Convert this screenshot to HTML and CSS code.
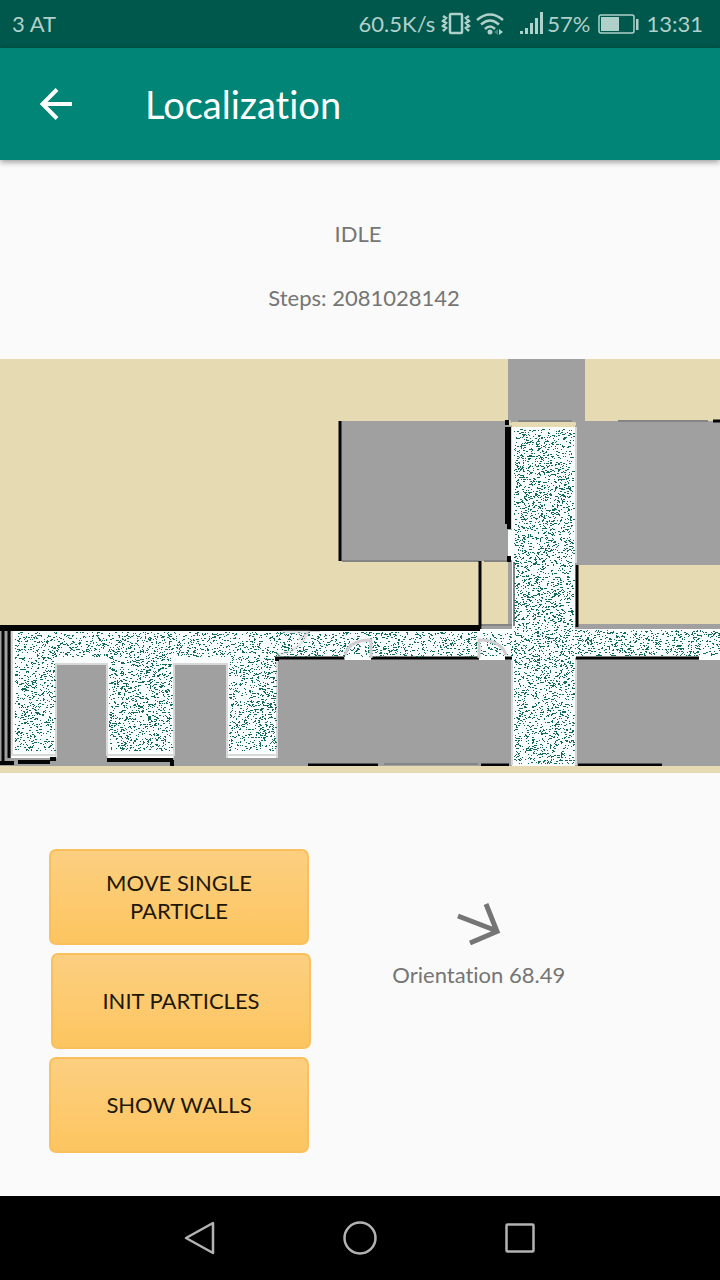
FILE: index.html
```html
<!DOCTYPE html>
<html lang="en">
<head>
<meta charset="utf-8">
<meta name="viewport" content="width=device-width, initial-scale=1">
<title>Localization</title>
<link rel="stylesheet" href="styles.css">
</head>
<body>
<div class="screen">
  <div class="status-bar">
    <span class="carrier">3 AT</span>
    <span class="speed">60.5K/s</span>
    <svg class="icon-vibrate" width="30" height="26" viewBox="0 0 30 26" aria-hidden="true">
      <rect x="9" y="3" width="12" height="19" rx="1" fill="none" stroke="currentColor" stroke-width="2.500"/>
      <path d="M2 5l3 2-3 3 3 2-3 3 3 2-3 3M28 5l-3 2 3 3-3 2 3 3-3 2 3 3" fill="none" stroke="currentColor" stroke-width="2.500"/>
    </svg>
    <svg class="icon-wifi" width="28" height="26" viewBox="0 0 28 26" aria-hidden="true">
      <path d="M1 9Q14-2 27 9M5 13.500Q14 5.500 23 13.500M9 18Q14 13 19 18" fill="none" stroke="currentColor" stroke-width="2.500"/>
      <circle cx="14" cy="21" r="2.500" fill="currentColor"/>
      <path d="M22 18v6l-4-3z" fill="currentColor" opacity=".4"/>
      <path d="M23 18v6l4-3z" fill="currentColor"/>
    </svg>
    <svg class="icon-signal" width="24" height="26" viewBox="0 0 24 26" aria-hidden="true">
      <path d="M0 20h3v3H0zM5 17h3v6H5zM10 12h3v11h-3zM15 7h3v16h-3zM20 1h3v22h-3z" fill="currentColor"/>
    </svg>
    <span class="percent">57%</span>
    <svg class="icon-battery" width="42" height="20" viewBox="0 0 42 20" aria-hidden="true">
      <rect x="1" y="1" width="35" height="18" rx="2" fill="none" stroke="currentColor" stroke-width="1.500"/>
      <path d="M3 3h18v14H3zM38 5h2.500v11H38z" fill="currentColor"/>
    </svg>
    <span class="clock">13:31</span>
  </div>

  <header class="app-bar">
    <button class="back" type="button" aria-label="Navigate up">
      <svg width="32" height="32" viewBox="0 0 32 32" aria-hidden="true">
        <path d="M32 16H3M17 1.500L2.500 16 17 30.500" fill="none" stroke="currentColor" stroke-width="4"/>
      </svg>
    </button>
    <h1 class="title">Localization</h1>
  </header>

  <main class="content">
    <div class="readout">
      <p class="state">IDLE</p>
      <p class="steps">Steps: 2081028142</p>
    </div>

    <svg class="map" viewBox="0 359 720 414" role="img" aria-label="Floor plan with particles">
      <rect class="ground" x="0" y="359" width="720" height="414"/>
      <g class="room">
        <path d="M508 359h77v63h-77zM340 421h172v140H340zM575 421h145v144H575z"/>
        <path d="M107 758h70v8h-70zM508 560h6v67h-6zM482 624h32v5h-32zM575 624h145v5H575zM276 658h236v108H276zM575 658h145v108H575zM0 625h14v141H0z"/>
      </g>
      <path class="corridor" d="M11 630H480V629H512V560H508V530H512V427H575V629H720V657H575V766H512V657H277V758H228V664H173V758H108V664H56V758H11z"/>
      <path class="room" d="M56 664h51v102H56zM174 664h53v102h-53zM227 758h50v8h-50zM0 758h59v8H0zM276 660h236v103H276z"/>
      <path class="trim" d="M12 630v126M12 755h43M108 755h65M228 755h49M56 758v-94h51v92M174 756v-92h53v94M277 758v-98M511 427v102M512 660v105M576 427v136M576 660v105M320 631h-10l-12 9"/>
      <path class="sill" d="M509 424h67M509 420v5"/>
      <path class="wall-soft" d="M518 421h54M618 421h90M384 764h94M342 561h137M484 561h26M514 562v64M480 625h32"/>
      <path class="wall" d="M0 628h480" stroke-width="6"/>
      <path class="wall" d="M3 625v140M9 630v128" stroke-width="3"/>
      <path class="wall" d="M508 427v97" stroke-width="6"/>
      <path class="wall" d="M507 420v5M509 522v7M509 556v6" stroke-width="4"/>
      <path class="wall" d="M340 421v140M480 561v68M577 565v62M275 658h69M371 658h108M505 658h7M576 658h123M713 421h7M308 765h70M481 765h28M578 765h84" stroke-width="3"/>
      <path class="wall" d="M0 763h14M18 762h32M50 759h6M107 760h66M172 760v6M277 657v4" stroke-width="4"/>
      <path class="ground" d="M0 766h720v7H0z"/>
      <path class="corridor" d="M345 654h26v6h-26zM479 654h26v6h-26zM699 655h21v5h-21zM512 655h63v6h-63z"/>
      <path class="particles" id="particles"/>
      <path class="door" d="M371 658v-18q-22 0-26 15M479 658v-18q22 0 27 15"/>
      <path class="door faint" d="M277 655q24-4 31-23h-26"/>
    </svg>

    <div class="panel">
      <div class="actions">
        <button class="action" type="button">Move single particle</button>
        <button class="action shifted" type="button">Init particles</button>
        <button class="action" type="button">Show walls</button>
      </div>
      <div class="compass">
        <svg width="48" height="48" viewBox="0 0 48 48" aria-hidden="true">
          <path d="M3 17l39 15M31 5l11 27.500L15 44" fill="none" stroke="currentColor" stroke-width="5"/>
        </svg>
        <p class="heading">Orientation 68.49</p>
      </div>
    </div>
  </main>

  <nav class="nav-bar" aria-label="System">
    <button class="nav-key" type="button" aria-label="Back">
      <svg width="36" height="36" viewBox="0 0 36 36" aria-hidden="true"><path d="M31 3v30L4 18z" fill="none" stroke="currentColor" stroke-width="2.500" stroke-linejoin="round"/></svg>
    </button>
    <button class="nav-key" type="button" aria-label="Home">
      <svg width="36" height="36" viewBox="0 0 36 36" aria-hidden="true"><circle cx="18" cy="18" r="15.500" fill="none" stroke="currentColor" stroke-width="2.500"/></svg>
    </button>
    <button class="nav-key" type="button" aria-label="Recent apps">
      <svg width="36" height="36" viewBox="0 0 36 36" aria-hidden="true"><rect x="4.500" y="4.500" width="27" height="27" rx="1" fill="none" stroke="currentColor" stroke-width="2.500"/></svg>
    </button>
  </nav>
</div>
<script src="particles.js"></script>
</body>
</html>
```

FILE: styles.css
```css
* {
  box-sizing: border-box;
}

body {
  margin: 0;
  background: #fafafa;
  color: #757575;
  font-family: Lato, "Open Sans", sans-serif;
  font-size: 22px;
  font-variant-ligatures: none;
  line-height: 28px;
}

h1,
p {
  margin: 0;
}

svg {
  display: block;
}

button {
  margin: 0;
  padding: 0;
  border: 0;
  background: none;
  color: inherit;
  font: inherit;
  font-variant-ligatures: inherit;
}

.screen {
  display: flex;
  flex-direction: column;
  min-height: 100vh;
}

.status-bar {
  display: flex;
  align-items: center;
  height: 48px;
  padding: 0 17px 0 12px;
  background: #00574b;
  color: #b0d0ca;
}

.carrier {
  margin-right: auto;
}

.speed {
  margin-right: 6px;
}

.icon-wifi {
  margin-left: 5px;
}

.icon-signal {
  margin-left: 16px;
}

.percent {
  margin: 0 8px 0 3px;
}

.clock {
  margin-left: 6px;
}

.app-bar {
  z-index: 1;
  display: flex;
  align-items: center;
  gap: 73px;
  height: 112px;
  padding: 0 40px;
  background: #008577;
  box-shadow: 0 2px 6px rgba(0, 0, 0, 0.4);
  color: #fff;
}

.title {
  font-size: 38px;
  font-weight: 400;
  line-height: 44px;
}

.content {
  flex: 1;
}

.readout {
  display: flex;
  flex-direction: column;
  gap: 36px;
  padding: 60px 0 47px;
  text-align: center;
}

.state {
  padding-right: 4px;
}

.steps {
  padding-left: 8px;
}

.map {
  width: 100%;
  height: auto;
}

.ground {
  fill: #e5dab2;
}

.room {
  fill: #a0a0a0;
}

.corridor {
  fill: #fafffe;
}

.trim {
  fill: none;
  stroke: #d8d8d8;
  stroke-width: 2;
}

.sill {
  fill: none;
  stroke: #e5dab2;
  stroke-width: 3;
}

.wall {
  fill: none;
  stroke: #050505;
}

.wall-soft {
  fill: none;
  stroke: #858585;
  stroke-width: 2;
}

.door {
  fill: none;
  stroke: #d0ced0;
  stroke-width: 3;
}

.faint {
  opacity: 0.5;
}

.particles {
  fill: #13695a;
  shape-rendering: crispEdges;
}

.panel {
  display: flex;
  padding: 76px 0 43px;
}

.actions {
  display: flex;
  flex-direction: column;
  gap: 8px;
  width: 50%;
  padding: 0 51px 0 49px;
}

.action {
  height: 96px;
  padding: 0 32px;
  border: 2px solid #f9c05d;
  border-radius: 7px;
  background: linear-gradient(#fccf80, #fdc560);
  color: #211705;
  text-transform: uppercase;
}

.shifted {
  margin: 0 -2px 0 2px;
}

.compass {
  display: flex;
  flex-direction: column;
  align-items: center;
  gap: 14px;
  width: 33%;
  padding-top: 50px;
}

.nav-bar {
  display: flex;
  justify-content: center;
  gap: 124px;
  height: 84px;
  background: #000;
  color: #b3b3b3;
}

.nav-key {
  display: grid;
  place-items: center;
  width: 36px;
}
```

FILE: particles.js
```js
// Scatters particles over the walkable areas of the floor plan.
const areas = [
  { x: 15, y: 632, w: 462, h: 25, density: 0.15 },
  { x: 15, y: 657, w: 40, h: 94, density: 0.15 },
  { x: 109, y: 657, w: 63, h: 94, density: 0.17 },
  { x: 229, y: 657, w: 47, h: 94, density: 0.17 },
  { x: 514, y: 429, w: 60, h: 335, density: 0.17 },
  { x: 480, y: 632, w: 33, h: 24, density: 0.12 },
  { x: 575, y: 630, w: 145, h: 26, density: 0.16 }
];

let seed = 4217;
function random() {
  seed = (seed + 0x6d2b79f5) | 0;
  let t = Math.imul(seed ^ (seed >>> 15), seed | 1);
  t ^= t + Math.imul(t ^ (t >>> 7), t | 61);
  return ((t ^ (t >>> 14)) >>> 0) / 4294967296;
}

let d = "";
for (const area of areas) {
  const count = Math.round(area.w * area.h * area.density);
  for (let i = 0; i < count; i += 1) {
    const x = area.x + Math.floor(random() * area.w);
    const y = area.y + Math.floor(random() * area.h);
    const w = random() < 0.3 ? 2 : 1;
    d += `M${x} ${y}h${w}v1h-${w}z`;
  }
}
document.getElementById("particles").setAttribute("d", d);
```
